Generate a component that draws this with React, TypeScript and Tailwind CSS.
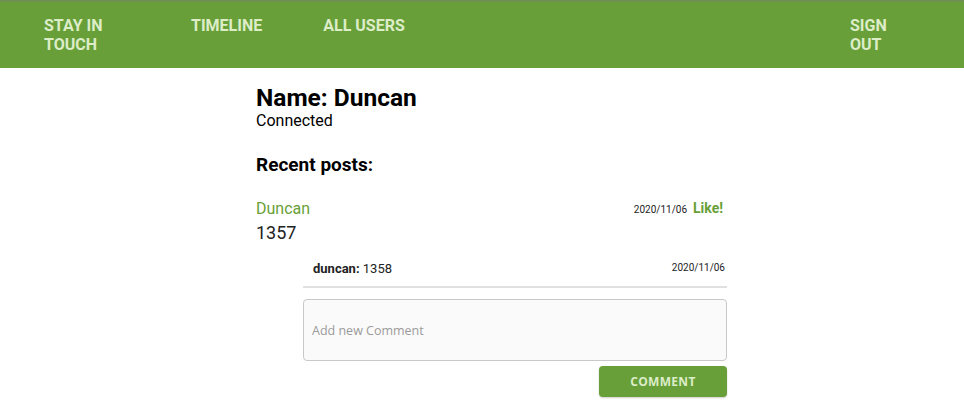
import React from "react";

export default function App() {
  return (
    <div className="w-[964px] h-[408px] bg-white overflow-hidden" style={{ fontFamily: "Roboto, sans-serif" }}>
      <header className="h-[68px] bg-[#689f38] border-t-2 border-[#6f8f52] flex items-start pt-[14px] pl-[44px] pr-[60px] text-[#dcedc8] font-bold text-[16px] leading-[19px] uppercase">
        <div className="w-[72px]">Stay in touch</div>
        <div className="ml-[75px]">Timeline</div>
        <div className="ml-[61px]">All users</div>
        <div className="ml-auto w-[54px]">Sign out</div>
      </header>
      <main className="w-[471px] ml-[256px] pt-[16px]">
        <h1 className="text-[24.5px] font-bold leading-[28px] text-black">Name: Duncan</h1>
        <div className="text-[16px] leading-[18px] text-black">Connected</div>
        <h2 className="mt-[23px] text-[19px] font-bold leading-[23px] text-black">Recent posts:</h2>
        <div className="mt-[23px] flex items-start justify-between">
          <div>
            <div className="text-[16px] leading-[20px] text-[#689f38]">Duncan</div>
            <div className="text-[18px] leading-[28px] text-[#222]">1357</div>
          </div>
          <div className="flex items-baseline gap-[6px] -mt-[1px]">
            <span className="text-[10px] text-[#222]">2020/11/06</span>
            <span className="text-[14px] font-bold text-[#689f38] mr-[4px]">Like!</span>
          </div>
        </div>
        <div className="ml-[47px]">
          <div className="mt-[12px] flex items-center justify-between pl-[10px] pr-[2px] pb-[7px] border-b-2 border-[#e0e0e0]">
            <div className="text-[13px] text-[#222]">
              <span className="font-bold">duncan:</span> 1358
            </div>
            <span className="text-[10px] text-[#222] -mt-[3px]">2020/11/06</span>
          </div>
          <textarea
            placeholder="Add new Comment"
            className="mt-[11px] block w-full h-[62px] rounded-[4px] border border-[#c8c8c8] bg-[#fafafa] px-[8px] pt-[22px] text-[12.5px] resize-none outline-none placeholder:text-[#9a9a9a]"
            style={{ fontFamily: "'Open Sans', sans-serif" }}
          />
          <div className="flex justify-end mt-[5px]">
            <button
              className="w-[128px] h-[31px] pt-[1px] rounded-[4px] bg-[#689f38] text-[#dcedc8] text-[12px] font-bold tracking-[0.3px] uppercase shadow-[0_1px_2px_rgba(0,0,0,0.2)]"
              style={{ fontFamily: "'Open Sans', sans-serif" }}
            >
              Comment
            </button>
          </div>
        </div>
      </main>
    </div>
  );
}
